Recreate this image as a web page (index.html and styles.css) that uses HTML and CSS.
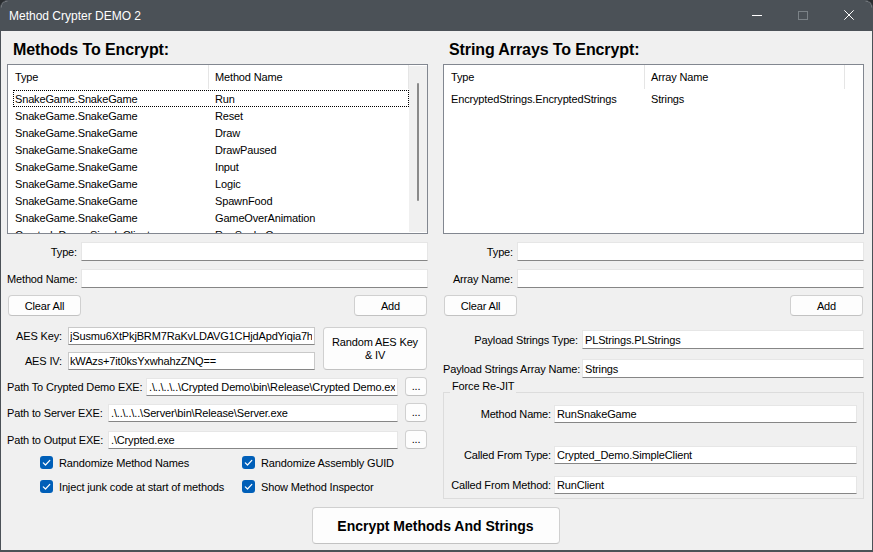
FILE: index.html
```html
<!DOCTYPE html>
<html lang="en">
<head>
<meta charset="utf-8">
<title>Method Crypter DEMO 2</title>
<link rel="stylesheet" href="styles.css">
</head>
<body>
<div class="window">
  <header class="titlebar">
    <span class="title">Method Crypter DEMO 2</span>
    <div class="caption">
      <span class="cap-btn"><svg width="10" height="10" viewBox="0 0 10 10"><path d="M0 5.5H10" stroke="#ffffff" stroke-width="1"/></svg></span>
      <span class="cap-btn"><svg width="10" height="10" viewBox="0 0 10 10"><rect x="0.5" y="1.5" width="9" height="8" fill="none" stroke="#7b8287" stroke-width="1"/></svg></span>
      <span class="cap-btn"><svg width="10" height="10" viewBox="0 0 10 10"><path d="M0.3 0.3L9.7 9.7M9.7 0.3L0.3 9.7" stroke="#ffffff" stroke-width="1"/></svg></span>
    </div>
  </header>
  <main class="client">
    <div class="columns">
      <section class="col">
        <h2 class="heading">Methods To Encrypt:</h2>
        <div class="listview">
          <div class="lv-main">
            <div class="lv-header">
              <span class="lv-hcell hc1">Type</span>
              <span class="lv-hcell hc2">Method Name</span>
            </div>
            <div class="lv-body">
              <div class="lv-row focused"><span class="lv-cell c1">SnakeGame.SnakeGame</span><span class="lv-cell">Run</span></div>
              <div class="lv-row"><span class="lv-cell c1">SnakeGame.SnakeGame</span><span class="lv-cell">Reset</span></div>
              <div class="lv-row"><span class="lv-cell c1">SnakeGame.SnakeGame</span><span class="lv-cell">Draw</span></div>
              <div class="lv-row"><span class="lv-cell c1">SnakeGame.SnakeGame</span><span class="lv-cell">DrawPaused</span></div>
              <div class="lv-row"><span class="lv-cell c1">SnakeGame.SnakeGame</span><span class="lv-cell">Input</span></div>
              <div class="lv-row"><span class="lv-cell c1">SnakeGame.SnakeGame</span><span class="lv-cell">Logic</span></div>
              <div class="lv-row"><span class="lv-cell c1">SnakeGame.SnakeGame</span><span class="lv-cell">SpawnFood</span></div>
              <div class="lv-row"><span class="lv-cell c1">SnakeGame.SnakeGame</span><span class="lv-cell">GameOverAnimation</span></div>
              <div class="lv-row"><span class="lv-cell c1">Crypted_Demo.SimpleClient</span><span class="lv-cell">RunSnakeGame</span></div>
            </div>
          </div>
          <div class="scrollbar"><div class="thumb"></div></div>
        </div>

        <div class="field mt8"><label class="lbl w74">Type:</label><input class="tb" type="text" value=""></div>
        <div class="field mt8"><label class="lbl w74">Method Name:</label><input class="tb" type="text" value=""></div>
        <div class="btn-row"><button class="btn">Clear All</button><button class="btn">Add</button></div>

        <div class="aes">
          <div class="aes-fields">
            <div class="field h18"><label class="lbl w61">AES Key:</label><input class="tb tb-boxed" type="text" value="jSusmu6XtPkjBRM7RaKvLDAVG1CHjdApdYiqia7h-SgHq"></div>
            <div class="field h18"><label class="lbl w61">AES IV:</label><input class="tb tb-boxed" type="text" value="kWAzs+7it0ksYxwhahzZNQ=="></div>
          </div>
          <button class="btn btn-random">Random AES Key<br>&amp; IV</button>
        </div>

        <div class="path mt7"><label class="plbl w139">Path To Crypted Demo EXE:</label><input class="tb" type="text" value=".\..\..\..\Crypted Demo\bin\Release\Crypted Demo.exe"><button class="btn dots">...</button></div>
        <div class="path mt7"><label class="plbl w101">Path to Server EXE:</label><input class="tb" type="text" value=".\..\..\..\Server\bin\Release\Server.exe"><button class="btn dots">...</button></div>
        <div class="path mt8"><label class="plbl w101">Path to Output EXE:</label><input class="tb" type="text" value=".\Crypted.exe"><button class="btn dots">...</button></div>

        <div class="checks">
          <label class="check"><span class="box"><svg width="13" height="13" viewBox="0 0 13 13"><path d="M3.3 6.8L5.5 9L9.8 4.4" fill="none" stroke="#ffffff" stroke-width="1.2" stroke-linecap="round" stroke-linejoin="round"/></svg></span>Randomize Method Names</label>
          <label class="check"><span class="box"><svg width="13" height="13" viewBox="0 0 13 13"><path d="M3.3 6.8L5.5 9L9.8 4.4" fill="none" stroke="#ffffff" stroke-width="1.2" stroke-linecap="round" stroke-linejoin="round"/></svg></span>Randomize Assembly GUID</label>
          <label class="check"><span class="box"><svg width="13" height="13" viewBox="0 0 13 13"><path d="M3.3 6.8L5.5 9L9.8 4.4" fill="none" stroke="#ffffff" stroke-width="1.2" stroke-linecap="round" stroke-linejoin="round"/></svg></span>Inject junk code at start of methods</label>
          <label class="check"><span class="box"><svg width="13" height="13" viewBox="0 0 13 13"><path d="M3.3 6.8L5.5 9L9.8 4.4" fill="none" stroke="#ffffff" stroke-width="1.2" stroke-linecap="round" stroke-linejoin="round"/></svg></span>Show Method Inspector</label>
        </div>
      </section>

      <section class="col">
        <h2 class="heading">String Arrays To Encrypt:</h2>
        <div class="listview">
          <div class="lv-main">
            <div class="lv-header">
              <span class="lv-hcell hc1">Type</span>
              <span class="lv-hcell hc2">Array Name</span>
            </div>
            <div class="lv-body">
              <div class="lv-row"><span class="lv-cell c1">EncryptedStrings.EncryptedStrings</span><span class="lv-cell">Strings</span></div>
            </div>
          </div>
        </div>

        <div class="field mt8"><label class="lbl w74">Type:</label><input class="tb" type="text" value=""></div>
        <div class="field mt8"><label class="lbl w74">Array Name:</label><input class="tb" type="text" value=""></div>
        <div class="btn-row"><button class="btn">Clear All</button><button class="btn">Add</button></div>

        <div class="field mt14"><label class="lbl w139">Payload Strings Type:</label><input class="tb" type="text" value="PLStrings.PLStrings"></div>
        <div class="field mt10"><label class="lbl w139">Payload Strings Array Name:</label><input class="tb" type="text" value="Strings"></div>

        <fieldset class="group">
          <legend class="group-title">Force Re-JIT</legend>
          <div class="field h18"><label class="lbl w110">Method Name:</label><input class="tb" type="text" value="RunSnakeGame"></div>
          <div class="field h18 mt23"><label class="lbl w110">Called From Type:</label><input class="tb" type="text" value="Crypted_Demo.SimpleClient"></div>
          <div class="field h18 mt12"><label class="lbl w110">Called From Method:</label><input class="tb" type="text" value="RunClient"></div>
        </fieldset>
      </section>
    </div>

    <div class="footer">
      <button class="btn btn-big">Encrypt Methods And Strings</button>
    </div>
  </main>
</div>
</body>
</html>
```

FILE: styles.css
```css
* {
  box-sizing: border-box;
}

html, body {
  margin: 0;
  padding: 0;
}

body {
  background: #2a2d30;
  font-family: "Liberation Sans", Arial, sans-serif;
  font-size: 11px;
  letter-spacing: -0.15px;
  color: #000;
}

.window {
  width: 873px;
  height: 552px;
  border: 1px solid #4b5157;
  border-bottom-width: 2px;
  border-radius: 8px 8px 0 0;
  background: #f0f0f0;
  display: flex;
  flex-direction: column;
  overflow: hidden;
}

/* ---------- title bar ---------- */
.titlebar {
  flex: none;
  height: 30px;
  background: #4b5157;
  color: #fff;
  display: flex;
  align-items: center;
}

.title {
  flex: 1;
  padding-left: 8px;
  font-size: 12px;
  letter-spacing: 0;
}

.caption {
  display: flex;
  align-self: stretch;
}

.cap-btn {
  width: 46px;
  display: flex;
  justify-content: center;
  align-items: flex-start;
  padding-top: 9px;
}

.cap-btn svg {
  display: block;
}

/* ---------- client ---------- */
.client {
  flex: 1;
  display: flex;
  flex-direction: column;
  padding: 0 8px 6px 6px;
}

.columns {
  display: flex;
  gap: 15px;
}

.col {
  width: 421px;
  display: flex;
  flex-direction: column;
}

.heading {
  margin: 9px 0 4px;
  height: 20px;
  line-height: 20px;
  padding-left: 6px;
  font-size: 16px;
  font-weight: bold;
  letter-spacing: -0.1px;
}

/* ---------- list view ---------- */
.listview {
  height: 170px;
  border: 1px solid #828790;
  background: #fff;
  display: flex;
}

.lv-main {
  flex: 1;
  min-width: 0;
  overflow: hidden;
}

.lv-header {
  display: flex;
  height: 24px;
  line-height: 24px;
}

.lv-hcell {
  flex: none;
  border-right: 1px solid #e5e5e5;
  white-space: nowrap;
}

.hc1 {
  width: 201px;
  padding-left: 7px;
}

.hc2 {
  width: 200px;
  padding-left: 6px;
}

.lv-body {
  padding-top: 1px;
}

.lv-row {
  display: flex;
  height: 17px;
  margin-left: 5px;
  margin-right: 0;
  padding: 1px 0 0 1px;
  border: 1px dotted transparent;
  line-height: 15px;
  white-space: nowrap;
}

.lv-row.focused {
  border-color: #000;
}

.lv-cell.c1 {
  width: 200px;
  flex: none;
}

.scrollbar {
  flex: none;
  width: 18px;
  margin: 1px 0;
  background: #f0f0f0;
  display: flex;
  justify-content: center;
}

.thumb {
  width: 2px;
  height: 118px;
  margin-top: 17px;
  background: #8a8a8a;
  border-radius: 1px;
}

/* ---------- fields ---------- */
.field {
  display: flex;
  align-items: center;
  height: 19px;
}

.field.h18 {
  height: 18px;
}

.lbl {
  flex: none;
  text-align: right;
  padding-right: 4px;
  white-space: nowrap;
}

.w61 { width: 61px; padding-right: 6px; }
.w74 { width: 74px; }
.w110 { width: 110px; padding-right: 3px; }
.w139 { width: 139px; }

.mt7 { margin-top: 7px; }
.mt8 { margin-top: 8px; }
.mt10 { margin-top: 10px; }
.mt12 { margin-top: 12px; }
.mt14 { margin-top: 14px; }
.mt23 { margin-top: 23px; }

.tb {
  flex: 1;
  min-width: 0;
  height: 100%;
  margin: 0;
  padding: 0 2px;
  border: 1px solid #e6e6e6;
  border-bottom-color: #868686;
  background: #fff;
  font: inherit;
  letter-spacing: inherit;
  color: #000;
  outline: none;
}

.tb-boxed {
  border-color: #c9c9c9;
  border-bottom-color: #868686;
  padding-left: 1px;
}

/* ---------- buttons ---------- */
.btn {
  margin: 0;
  padding: 0;
  font: inherit;
  letter-spacing: inherit;
  color: #000;
  background: #fdfdfd;
  border: 1px solid #d0d0d0;
  border-bottom-color: #c2c2c2;
  border-radius: 4px;
}

.btn-row {
  display: flex;
  justify-content: space-between;
  margin-top: 7px;
  height: 21px;
  padding: 0 1px;
}

.btn-row .btn {
  width: 73px;
  height: 21px;
}

.aes {
  display: flex;
  margin-top: 11px;
}

.aes-fields {
  width: 308px;
  display: flex;
  flex-direction: column;
  gap: 7px;
}

.btn-random {
  width: 104px;
  height: 43px;
  margin-left: 8px;
  line-height: 13px;
}

.path {
  display: flex;
  align-items: center;
  height: 19px;
}

.path .tb {
  height: 18px;
}

.plbl {
  flex: none;
  white-space: nowrap;
}

.w101 { width: 101px; }
.plbl.w139 { width: 139px; }

.dots {
  flex: none;
  width: 22px;
  height: 19px;
  margin-left: 7px;
  margin-right: 1px;
  line-height: 15px;
}

/* ---------- checkboxes ---------- */
.checks {
  display: grid;
  grid-template-columns: 202px auto;
  row-gap: 11px;
  margin-top: 7px;
  padding-left: 33px;
}

.check {
  display: flex;
  align-items: center;
  gap: 6px;
  height: 13px;
  white-space: nowrap;
}

.box {
  flex: none;
  width: 13px;
  height: 13px;
  border-radius: 3px;
  background: #005fb8;
}

.box svg {
  display: block;
}

/* ---------- group box ---------- */
.group {
  margin: 2px 0 0;
  padding: 0 6px 4px 0;
  border: 1px solid #dcdcdc;
  min-width: 0;
}

.group-title {
  margin-left: 6px;
  padding: 0 2px 12px;
  line-height: 13px;
}

/* ---------- footer ---------- */
.footer {
  margin-top: auto;
  display: flex;
  justify-content: center;
}

.btn-big {
  width: 248px;
  height: 37px;
  font-size: 14px;
  font-weight: bold;
  letter-spacing: 0;
}
```
